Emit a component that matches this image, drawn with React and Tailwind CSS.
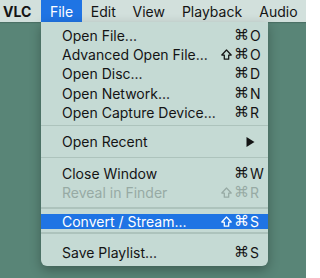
import React from "react";

const font = { fontFamily: "Inter, 'Noto Sans', 'DejaVu Sans', sans-serif" };

function Shift() {
  return (
    <svg width="11" height="11" viewBox="0 0 11 11" className="mr-[2px]">
      <path d="M5.5 1 L10.2 6 H7.7 V10.2 H3.3 V6 H0.8 Z" fill="none" stroke="currentColor" strokeWidth="1.25" strokeLinejoin="round" />
    </svg>
  );
}

function Item({ label, shift, cmd = true, k = "", disabled, active, arrow, h = "h-[19.3px]" }) {
  const color = active ? "text-white" : disabled ? "text-[#97aaa4]" : "text-[#141414]";
  return (
    <div className={`flex items-center ${h} pl-[21px] pr-[6px] ${active ? "bg-[#1f74e4]" : ""} ${color}`}>
      <span className="flex-1 whitespace-nowrap">{label}</span>
      {arrow ? (
        <svg width="9" height="10" viewBox="0 0 9 10" className="mr-[7px]">
          <path d="M0.5 0 L8.5 5 L0.5 10 Z" fill="#141414" />
        </svg>
      ) : (
        <>
          {shift && <Shift />}
          {cmd && (
            <span className="whitespace-nowrap leading-none" style={{ fontFamily: "'DejaVu Sans', sans-serif", fontSize: "15px" }}>⌘</span>
          )}
          <span className="w-[13px] pl-[1px] whitespace-nowrap">{k}</span>
        </>
      )}
    </div>
  );
}

function Sep({ cls }) {
  return (
    <div className={cls}>
      <div className="h-[1.5px] bg-[#adc3bc]" />
    </div>
  );
}

export default function App() {
  return (
    <div className="relative w-[306px] h-[278px] overflow-hidden bg-[#598577] text-[14px]" style={font}>
      <div className="flex h-[22px] items-center bg-[#d2e0dc] text-[#141414] shadow-[0_1px_1px_rgba(0,0,0,0.15)]">
        <div className="w-[41px] pl-[3px] font-bold">VLC</div>
        <div className="flex h-full w-[41px] items-center justify-center bg-[#1f74e4] text-white">File</div>
        <div className="w-[42.5px] text-center">Edit</div>
        <div className="w-[48.5px] text-center">View</div>
        <div className="w-[78px] text-center">Playback</div>
        <div className="w-[55px] text-center">Audio</div>
      </div>
      <div className="absolute left-[41px] top-[22px] w-[227px] rounded-b-[6px] bg-[#c5dad4] pt-[3.5px] pb-[4px] shadow-[0_4px_12px_rgba(0,0,0,0.3)]">
        <Item label="Open File..." k="O" />
        <Item label="Advanced Open File..." shift k="O" />
        <Item label="Open Disc..." k="D" />
        <Item label="Open Network..." k="N" />
        <Item label="Open Capture Device..." k="R" />
        <Sep cls="h-[10px] pt-[3px]" />
        <Item label="Open Recent" arrow />
        <Sep cls="h-[12.4px] pt-[5.5px]" />
        <Item label="Close Window" k="W" />
        <Item label="Reveal in Finder" shift k="R" disabled />
        <Sep cls="h-[11.7px] pt-[5px]" />
        <Item label="Convert / Stream..." shift k="S" active h="h-[15.5px]" />
        <Sep cls="h-[14px] pt-[3px]" />
        <Item label="Save Playlist..." k="S" h="h-[19px]" />
      </div>
    </div>
  );
}
